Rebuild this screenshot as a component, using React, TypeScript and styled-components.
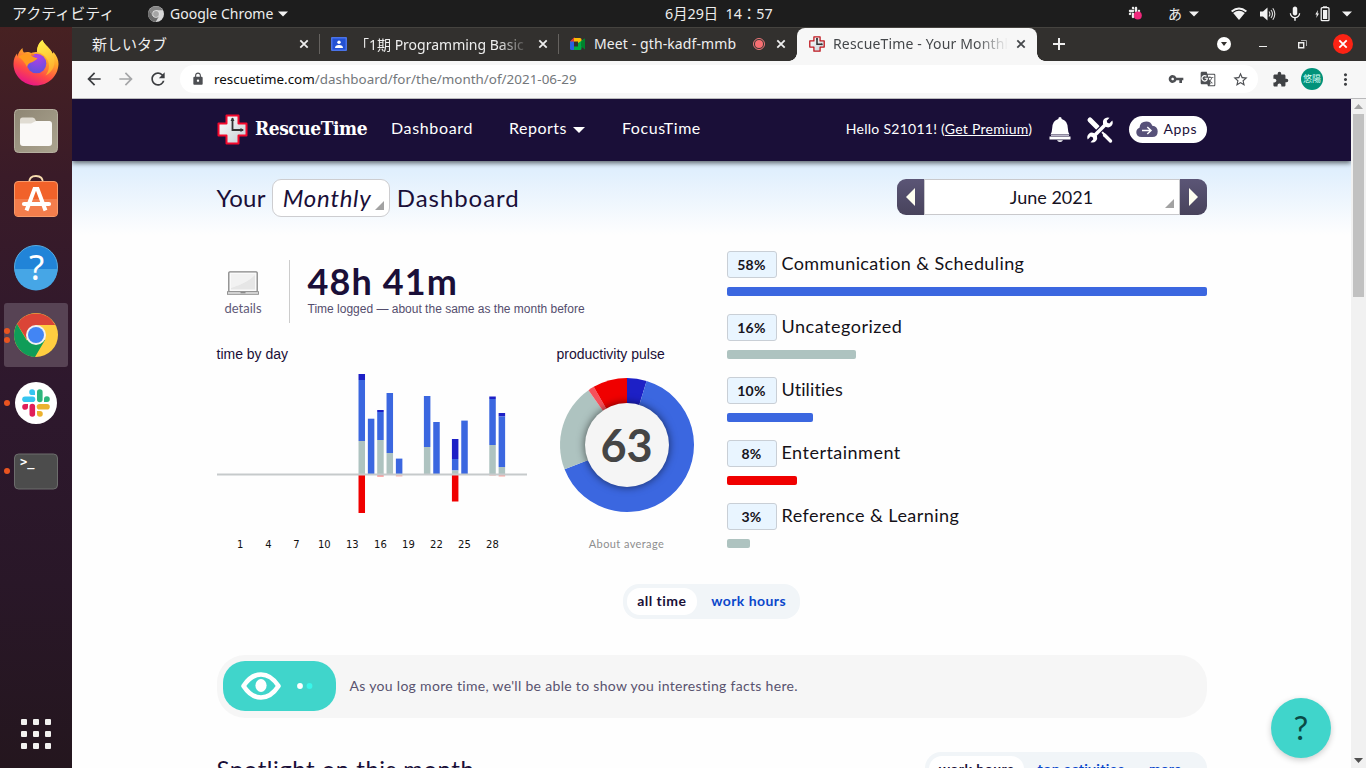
import React from 'react';
import styled, { createGlobalStyle, css } from 'styled-components';
import {
  MdArrowBack,
  MdArrowForward,
  MdRefresh,
  MdLock,
  MdVpnKey,
  MdGTranslate,
  MdStarBorder,
  MdExtension,
  MdMoreVert,
  MdMic,
} from 'react-icons/md';
import { FaSlack } from 'react-icons/fa';

const uiFont = '"Noto Sans", "Noto Sans CJK JP", sans-serif';
const pageFont = 'Lato, "Noto Sans CJK JP", sans-serif';

const colors = {
  veryProductive: '#1d20c6',
  productive: '#3b67e0',
  neutral: '#aec3c0',
  distracting: '#f5515b',
  veryDistracting: '#f00000',
};

const GlobalStyle = createGlobalStyle`
  * { box-sizing: border-box; }
  body { margin: 0; overflow: hidden; background: #fff; }
  svg { display: block; flex: none; overflow: visible; }
`;

/* ---------- desktop shell ---------- */

const Screen = styled.div`
  width: 1366px;
  height: 768px;
  overflow: hidden;
  display: flex;
  flex-direction: column;
  font-family: ${uiFont};
`;

const TopBar = styled.div`
  height: 27px;
  flex: none;
  background: #1d1d1d;
  color: #eee;
  font-size: 14px;
  line-height: 27px;
  display: grid;
  grid-template-columns: 1fr auto 1fr;
  white-space: pre;
`;

const TopLeft = styled.div`
  display: flex;
  align-items: center;
  padding-left: 12px;
`;

const Activities = styled.span`
  width: 136px;
  font-size: 15px;
`;

const AppName = styled.span`
  margin: 0 5px 0 6px;
`;

const Clock = styled.div`
  padding-left: 72px;
  width: 180px;
  font-size: 14.3px;
`;

const Tray = styled.div`
  display: flex;
  align-items: center;
  justify-content: flex-end;
  padding-right: 14px;
`;

const TrayItem = styled.span<{ $gap: number }>`
  display: flex;
  align-items: center;
  margin-left: ${(p) => p.$gap}px;
`;

const Desktop = styled.div`
  flex: 1;
  min-height: 0;
  display: flex;
`;

const Dock = styled.div`
  width: 72px;
  flex: none;
  padding-top: 2px;
  display: flex;
  flex-direction: column;
  background: linear-gradient(#472122 0%, #3a1b28 20%, #2e182d 48%, #291728 75%, #24161e 100%);
`;

const DockItem = styled.div<{ $active?: boolean }>`
  position: relative;
  height: 64px;
  margin: 2px 4px;
  border-radius: 3px;
  display: flex;
  align-items: center;
  justify-content: center;
  background: ${(p) => (p.$active ? '#574354' : 'transparent')};
`;

const RunningDots = styled.div`
  position: absolute;
  left: 0;
  top: 0;
  height: 100%;
  display: flex;
  flex-direction: column;
  justify-content: center;
  gap: 3px;
`;

const RunningDot = styled.i`
  width: 6px;
  height: 6px;
  border-radius: 50%;
  background: #e95420;
`;

const AppGrid = styled.div`
  margin: auto auto 19px;
  display: grid;
  grid-template-columns: repeat(3, 6px);
  gap: 6px;
`;

const GridDot = styled.i`
  width: 6px;
  height: 6px;
  border-radius: 1px;
  background: #f2f1ef;
`;

/* ---------- browser window ---------- */

const Browser = styled.div`
  flex: 1;
  min-width: 0;
  display: flex;
  flex-direction: column;
`;

const TabStrip = styled.div`
  height: 34px;
  flex: none;
  display: flex;
  background: #32302e;
  border-top: 1px solid #45433f;
  color: #eee;
`;

const Tab = styled.div<{ $width: number; $pad: number; $active?: boolean; $divider?: boolean }>`
  position: relative;
  width: ${(p) => p.$width}px;
  flex: none;
  display: flex;
  align-items: center;
  gap: 8px;
  padding: 0 8px 1px ${(p) => p.$pad}px;
  font-size: 14px;
  ${(p) =>
    p.$active &&
    css`
      background: #f7f7f7;
      color: #45484b;
      border-radius: 8px 8px 0 0;
      &::before,
      &::after {
        content: '';
        position: absolute;
        bottom: 0;
        width: 8px;
        height: 8px;
      }
      &::before {
        left: -8px;
        background: radial-gradient(circle at 0 0, transparent 7.5px, #f7f7f7 8px);
      }
      &::after {
        right: -8px;
        background: radial-gradient(circle at 100% 0, transparent 7.5px, #f7f7f7 8px);
      }
    `}
  ${(p) =>
    p.$divider &&
    css`
      &::after {
        content: '';
        position: absolute;
        right: 0;
        top: 6px;
        width: 1px;
        height: 20px;
        background: #65625f;
      }
    `}
`;

const TabTitle = styled.span<{ $fade?: boolean; $spacing?: number; $size?: number }>`
  flex: 1;
  overflow: hidden;
  white-space: nowrap;
  padding-bottom: 1px;
  letter-spacing: ${(p) => p.$spacing ?? 0}px;
  font-size: ${(p) => p.$size ?? 14}px;
  margin-right: ${(p) => (p.$fade ? -3 : 0)}px;
  ${(p) => p.$fade && css`mask-image: linear-gradient(90deg, #000 calc(100% - 32px), transparent);`}
`;

const Recording = styled.i`
  width: 12px;
  height: 12px;
  border-radius: 50%;
  border: 1px solid #f0787a;
  padding: 1px;
  background: #f86f72 content-box;
`;

const WindowControls = styled.div`
  flex: 1;
  display: flex;
  align-items: center;
  padding: 0 13px 1px 14px;
`;

const TabSearch = styled.i`
  width: 14px;
  height: 14px;
  border-radius: 50%;
  background: #fff;
  margin-left: auto;
  display: flex;
  align-items: center;
  justify-content: center;
`;

const Minimize = styled.i`
  width: 8px;
  height: 1px;
  margin: 5px 31px 0 28px;
  background: #eee;
`;

const CloseWindow = styled.i`
  width: 20px;
  height: 20px;
  margin-left: 26px;
  border-radius: 50%;
  background: #fb2314;
  color: #fff;
  display: flex;
  align-items: center;
  justify-content: center;
`;

const Toolbar = styled.div`
  height: 38px;
  flex: none;
  display: flex;
  align-items: center;
  padding: 0 11px 1px 12px;
  background: #f7f7f7;
  border-bottom: 1px solid #b9b9bb;
  color: #3f4144;
`;

const NavButton = styled.span<{ $muted?: boolean }>`
  width: 20px;
  margin-right: 12px;
  color: ${(p) => (p.$muted ? '#a5a6a8' : '#3b3d40')};
`;

const Omnibox = styled.div`
  flex: 1;
  height: 28px;
  border-radius: 14px;
  background: #fff;
  display: flex;
  align-items: center;
  padding: 0 9px 0 11px;
  color: #4d4f53;
`;

const Url = styled.span`
  flex: 1;
  margin-left: 9px;
  font-size: 13.4px;
  letter-spacing: 0.02px;
  color: #73777b;
  white-space: nowrap;
`;

const Domain = styled.span`
  color: #0c0c0c;
`;

const OmniboxActions = styled.span`
  display: flex;
  gap: 16px;
`;

const Avatar = styled.i`
  width: 22px;
  height: 22px;
  margin: 0 13px 0 12px;
  border-radius: 50%;
  background: #01927a;
  color: #d9fff6;
  font: 9px/22px ${uiFont};
  text-align: center;
  white-space: nowrap;
`;

const ExtensionSlot = styled.span`
  margin-left: 14px;
`;

const Viewport = styled.div`
  flex: 1;
  min-height: 0;
  display: flex;
`;

const ScrollTrack = styled.div`
  width: 15px;
  flex: none;
  padding: 5px 0;
  background: #f1f1f1;
  display: flex;
  flex-direction: column;
  align-items: center;
`;

const ScrollThumb = styled.i`
  width: 11px;
  height: 183px;
  margin: 5px 0 auto;
  background: #c1c1c1;
`;

/* ---------- page ---------- */

const Page = styled.div`
  position: relative;
  flex: 1;
  min-width: 0;
  overflow: hidden;
  font-family: ${pageFont};
  color: #1a0f38;
  background: #fefefe;
`;

const SiteHeader = styled.header`
  position: relative;
  height: 62px;
  padding: 0 144.5px 2px;
  display: flex;
  align-items: center;
  background: #1a0f38;
  color: #fff;
  box-shadow: 0 2px 5px rgba(0, 0, 0, 0.6);
  white-space: nowrap;
`;

const Brand = styled.span`
  width: 113px;
  margin: -2px 23px 0 7.5px;
  font: bold 19px 'DejaVu Serif Condensed', 'DejaVu Serif', serif;
  letter-spacing: -0.45px;
`;

const NavLink = styled.a<{ $gap: number; $spacing: number }>`
  display: flex;
  align-items: center;
  margin-right: ${(p) => p.$gap}px;
  padding-bottom: 3px;
  font-size: 16px;
  letter-spacing: ${(p) => p.$spacing}px;
`;

const Caret = styled.i`
  margin: 5px 0 0 6px;
  border: 6px solid transparent;
  border-top-color: #fff;
  border-bottom: 0;
`;

const Greeting = styled.span`
  margin: -1px 17px 0 auto;
  font-size: 14px;
  letter-spacing: 0.27px;
`;

const Underlined = styled.a`
  text-decoration: underline;
`;

const HeaderIcon = styled.span`
  margin: 1px 15.6px 0 0;
`;

const AppsButton = styled.span`
  width: 78px;
  height: 27px;
  margin-top: 1px;
  padding: 0 7px;
  border-radius: 14px;
  background: #fff;
  color: #1a0f38;
  font-size: 14px;
  line-height: 25px;
  letter-spacing: 0.6px;
  display: flex;
  gap: 6px;
`;

const AppsCloud = styled.span`
  padding-top: 5px;
`;

const Main = styled.main`
  padding: 18px 144.5px 0;
  background: linear-gradient(#dcedfd 0, #e2f0fd 14px, #fefefe 74px);
`;

const TitleRow = styled.div`
  height: 38px;
  display: flex;
  align-items: center;
  justify-content: space-between;
`;

const Title = styled.h1`
  margin: 0;
  font-size: 24px;
  font-weight: 400;
  display: flex;
  align-items: center;
`;

const TitleWord = styled.span<{ $spacing: number }>`
  letter-spacing: ${(p) => p.$spacing}px;
  padding-bottom: 2px;
`;

const Corner = styled.i<{ $right: number; $bottom: number }>`
  position: absolute;
  right: ${(p) => p.$right}px;
  bottom: ${(p) => p.$bottom}px;
  border-left: 9px solid transparent;
  border-bottom: 9px solid #a2a2a2;
`;

const PeriodSelect = styled.span`
  position: relative;
  width: 118px;
  height: 38px;
  margin: 0 7px 0 6px;
  padding: 0 0 0 10px;
  border: 1px solid #cdcdd0;
  border-radius: 9px;
  background: #fff;
  font-style: italic;
  line-height: 35px;
  letter-spacing: 0.75px;
`;

const DatePicker = styled.div`
  display: flex;
  width: 310px;
  height: 36px;
  margin-bottom: 2px;
`;

const DateStep = styled.span<{ $side: 'left' | 'right' }>`
  width: 27px;
  display: flex;
  align-items: center;
  justify-content: center;
  background: linear-gradient(#5b5576, #48435c);
  border-radius: ${(p) => (p.$side === 'left' ? '9px 0 0 9px' : '0 9px 9px 0')};
`;

const DateStepArrow = styled.i<{ $side: 'left' | 'right' }>`
  border: 9px solid transparent;
  ${(p) =>
    p.$side === 'left'
      ? css`
          border-left: 0;
          border-right-color: #fffff0;
        `
      : css`
          border-right: 0;
          border-left-color: #fffff0;
        `}
`;

const DateValue = styled.span`
  position: relative;
  flex: 1;
  border: 1px solid #c9c9cc;
  background: #fff;
  color: #16121f;
  font-size: 18px;
  line-height: 34px;
  text-align: center;
`;

const Columns = styled.div`
  display: grid;
  grid-template-columns: 480px 480px;
  column-gap: 30px;
  padding-top: 34px;
`;

const Summary = styled.div`
  display: flex;
  height: 72px;
  padding-top: 9px;
`;

const Details = styled.div`
  width: 73px;
  padding: 11px 19px 0 0;
  border-right: 1px solid #ccc;
  display: flex;
  flex-direction: column;
  align-items: center;
  gap: 5px;
  color: #615a78;
  font-size: 13px;
  line-height: 16px;
`;

const Logged = styled.div`
  padding-left: 18px;
`;

const LoggedTotal = styled.div`
  font-size: 36px;
  line-height: 42px;
  font-weight: 700;
  letter-spacing: 1.1px;
  height: 42px;
`;

const LoggedNote = styled.div`
  font: 12px/14px 'Liberation Sans', sans-serif;
  color: #544d6d;
  white-space: nowrap;
`;

const Charts = styled.div`
  display: grid;
  grid-template-columns: 310px 140px;
  column-gap: 30px;
  padding-top: 23px;
`;

const ChartTitle = styled.div`
  font: 14px/16px 'Liberation Sans', sans-serif;
`;

const DayChart = styled.div`
  margin-top: 4px;
`;

const PulseRing = styled.div`
  position: relative;
  width: 140px;
  height: 134px;
  margin-top: 16px;
  display: flex;
  justify-content: center;
`;

const PulseScore = styled.div`
  position: absolute;
  left: 28px;
  top: 25px;
  width: 84px;
  height: 84px;
  border-radius: 50%;
  background: #f5f5f5;
  box-shadow: 0 0 8px rgba(0, 0, 0, 0.6);
  color: #454545;
  font-size: 45px;
  font-weight: 700;
  line-height: 84px;
  text-align: center;
`;

const PulseNote = styled.div`
  margin-top: 25px;
  text-align: center;
  font-size: 11px;
  line-height: 14px;
  letter-spacing: 0.4px;
  color: #8e8e8e;
`;

const Category = styled.div`
  height: 63px;
`;

const CategoryHead = styled.div`
  height: 27px;
  display: flex;
  gap: 5px;
`;

const Percent = styled.span`
  width: 50px;
  height: 27px;
  border: 1px solid #c9cfd6;
  border-radius: 3px;
  background: #e9f5ff;
  font-size: 14px;
  font-weight: 700;
  line-height: 26px;
  letter-spacing: 0.3px;
  text-align: center;
  color: #161320;
`;

const CategoryName = styled.span<{ $spacing: number }>`
  font-size: 18px;
  line-height: 25px;
  letter-spacing: ${(p) => p.$spacing}px;
  color: #141118;
`;

const CategoryBar = styled.div<{ $width: number; $color: string }>`
  width: ${(p) => p.$width}px;
  height: 9px;
  margin-top: 9px;
  border-radius: 2px;
  background: ${(p) => p.$color};
`;

const Toggle = styled.div<{ $width: number }>`
  width: ${(p) => p.$width}px;
  height: 35px;
  padding: 4px;
  border-radius: 16px;
  background: #f1f5f8;
  display: flex;
  white-space: nowrap;
`;

const PeriodToggle = styled(Toggle)`
  margin: 18px auto 0 406.5px;
`;

const ToggleOption = styled.span<{ $selected?: boolean; $pad: number; $spacing?: number }>`
  height: 27px;
  padding: 0 ${(p) => p.$pad}px;
  border-radius: 13px;
  font-size: 14px;
  font-weight: 700;
  line-height: 25px;
  letter-spacing: ${(p) => p.$spacing ?? 0.45}px;
  color: ${(p) => (p.$selected ? '#1a0f38' : '#0b47cb')};
  background: ${(p) => (p.$selected ? '#fff' : 'transparent')};
`;

const Facts = styled.div`
  height: 63px;
  margin-top: 36px;
  padding: 0 0 2px 6px;
  border-radius: 28px;
  background: #f6f6f6;
  display: flex;
  align-items: center;
  gap: 14px;
  font-size: 14px;
  letter-spacing: 0.31px;
  color: #59536f;
`;

const FactsBadge = styled.span`
  width: 113px;
  height: 50px;
  border-radius: 22px;
  background: #40d5cb;
  display: flex;
  align-items: center;
  padding-left: 18px;
`;

const Spotlight = styled.div`
  display: flex;
  justify-content: space-between;
  margin-top: 34px;
`;

const SpotlightTitle = styled.h2`
  margin: 0;
  font-size: 24px;
  font-weight: 400;
  line-height: 34px;
  letter-spacing: 0.51px;
`;

const HelpButton = styled.button`
  position: absolute;
  right: 20px;
  bottom: 10px;
  width: 60px;
  height: 60px;
  padding: 0 0 2px;
  border: 0;
  border-radius: 50%;
  background: #40d5cb;
  box-shadow: 0 2px 6px rgba(0, 0, 0, 0.2);
  color: #0a4a45;
  font: 33px/58px ${pageFont};
  text-align: center;
`;

/* ---------- drawings ---------- */

const CloseIcon = () => (
  <svg width="16" height="16" viewBox="0 0 16 16">
    <path d="M4.300 4.300l7.400 7.400M11.700 4.300l-7.400 7.400" stroke="currentColor" strokeWidth="1.800" />
  </svg>
);

const PlusIcon = () => (
  <svg width="16" height="16" viewBox="0 0 16 16">
    <path d="M8 2v12M2 8h12" stroke="currentColor" strokeWidth="2" />
  </svg>
);

const DownCaret = () => (
  <svg width="10" height="6" viewBox="0 0 10 6">
    <path d="M0 .5h10L5 5.500z" fill="#f2f2f2" />
  </svg>
);

const ChromeLogo = ({ size, gray }: { size: number; gray?: boolean }) => {
  const [r, y, g, b] = gray ? ['#858585', '#d8d8d8', '#6b6b6b', '#a5a5a5'] : ['#db4437', '#ffcd40', '#0f9d58', '#4285f4'];
  return (
    <svg width={size} height={size} viewBox="0 0 44 44">
      <circle cx="22" cy="22" r="22" fill={y} />
      <path d="M3 11A22 22 0 0 1 41.2 12H22L12.5 26z" fill={r} />
      <path d="M3 11A22 22 0 0 0 21 44L31 27 22 22 12.9 27.5z" fill={g} />
      <circle cx="22" cy="22" r="10" fill={gray ? '#e5e5e5' : '#f1f1f1'} />
      <circle cx="22" cy="22" r="8" fill={b} />
    </svg>
  );
};

const FirefoxLogo = () => (
  <svg width="46" height="47" viewBox="0 1 46 47">
    <defs>
      <linearGradient id="ffBody" x1="0.75" y1="0" x2="0.3" y2="1">
        <stop offset="0" stopColor="#fff04a" />
        <stop offset="0.38" stopColor="#ffa32a" />
        <stop offset="0.7" stopColor="#ff4a45" />
        <stop offset="1" stopColor="#e5118e" />
      </linearGradient>
      <linearGradient id="ffFlame" x1="0.4" y1="0" x2="0.6" y2="1">
        <stop offset="0" stopColor="#fff04a" />
        <stop offset="1" stopColor="#ffa62b" />
      </linearGradient>
      <radialGradient id="ffGlobe" cx="0.55" cy="0.15" r="0.85">
        <stop offset="0" stopColor="#b23fe6" />
        <stop offset="1" stopColor="#5f52dc" />
      </radialGradient>
    </defs>
    <path
      d="M29.500 1c1 3.500 5 6 7.500 9.500 1.500 1.500 2 3 2.500 4.500l1-2C44 17 45.500 21 45.500 25 45 37.500 35 46.500 23 46.500S.5 37 .5 25C.5 20 2 17 4 14.500l.5 3C5.500 13 7.500 11 9.500 9c0 2 .5 3.500 1.500 4.500 3-1 5.500-.5 7 .5 2.500-1 4.500-1 6-1 0-5 2-9.500 5.500-12z"
      fill="url(#ffBody)"
    />
    <path d="M29.500 1c-4 3-5.500 7.500-5.500 12 7 1.500 12 7 12 14 0 4-1.500 7-3.500 9.500C40 33 44 25 40 15l-.5-.5C37.500 9 31 6 29.500 1z" fill="url(#ffFlame)" />
    <circle cx="23.500" cy="24.500" r="9.800" fill="url(#ffGlobe)" />
    <path d="M5.500 18c4-3.500 9-3.500 12.500-2 1.500 1.800 3.500 2.800 6.500 3-1 2.500-4 3-5.500 4.200-2.500.6-4.500 2-5 4.800-2-4-5-8-8.500-10z" fill="#ff9a1f" />
    <path d="M18 14.200q2.500 0 4 2.800l-3.500-.5z" fill="#ff7a1f" />
  </svg>
);

const FilesIcon = () => (
  <svg width="44" height="44" viewBox="0 0 44 44">
    <defs>
      <linearGradient id="filesBg" x1="0" y1="0" x2="1" y2="1">
        <stop offset="0" stopColor="#8e8674" />
        <stop offset="1" stopColor="#aba48f" />
      </linearGradient>
    </defs>
    <rect x=".5" y=".5" width="43" height="43" rx="4" fill="url(#filesBg)" stroke="#b5af9f" />
    <path d="M6 11q0-2.500 2.500-2.500h10q2 0 2.500 1.500l1 2h14V20H6z" fill="#e0dcd2" />
    <path d="M6 14.500h11l5-2.500h13q3 0 3 3v19q0 3-3 3H9q-3 0-3-3z" fill="#faf9f7" />
  </svg>
);

const SoftwareIcon = () => (
  <svg width="44" height="48" viewBox="0 2 44 48">
    <path d="M15 10q0-7 7-7t7 7" fill="none" stroke="#f7dcae" strokeWidth="1.800" />
    <rect x=".5" y="8.500" width="43" height="35" rx="3.500" fill="#f1622a" stroke="#f79a6a" />
    <path d="M1 26h42v14q0 3-3 3H4q-3 0-3-3z" fill="#f37d4c" />
    <path d="M12.500 37.500 20.500 16h3l8 21.500" fill="none" stroke="#fff" strokeWidth="4" />
    <path d="M10 31h25" stroke="#fff" strokeWidth="4.200" strokeLinecap="round" />
  </svg>
);

const HelpIcon = () => (
  <svg width="44" height="44" viewBox="0 0 44 44">
    <circle cx="22" cy="22" r="21.500" fill="#2184d8" stroke="#58acdf" />
    <path d="M.5 24h43a21.500 21.500 0 0 1-43 0z" fill="#46a6e6" />
    <text x="22.500" y="35" textAnchor="middle" fontFamily="Noto Sans" fontSize="35" fill="#fff">
      ?
    </text>
  </svg>
);

const SlackIcon = () => (
  <svg width="42" height="42" viewBox="0 0 42 42">
    <circle cx="21" cy="21" r="21" fill="#fff" />
    <g strokeWidth="5.600" strokeLinecap="round" fill="none">
      <path d="M10 17.300h7.500" stroke="#36c5f0" />
      <path d="M24.800 10v7.500" stroke="#2eb67d" />
      <path d="M32 24.700h-7.500" stroke="#ecb22e" />
      <path d="M17.300 32v-7.500" stroke="#e01e5a" />
    </g>
    <path d="M20 13h-2.800a2.900 2.900 0 1 1 2.800-3z" fill="#36c5f0" />
    <path d="M29 20v-2.800a2.900 2.900 0 1 1 3 2.800z" fill="#2eb67d" />
    <path d="M22 29h2.800a2.900 2.900 0 1 1-2.800 3z" fill="#ecb22e" />
    <path d="M13 22v2.800a2.900 2.900 0 1 1-3-2.800z" fill="#e01e5a" />
  </svg>
);

const TerminalIcon = () => (
  <svg width="44" height="37" viewBox="0 0 44 37">
    <rect x=".5" y="1" width="43" height="35" rx="4" fill="#4c4c4c" stroke="#6d6d6d" />
    <text x="6" y="13" fontFamily="DejaVu Sans Mono" fontWeight="bold" fontSize="12" fill="#fff">
      &gt;_
    </text>
  </svg>
);

const RescueCross = ({ size, small }: { size: number; small?: boolean }) => (
  <svg width={size} height={size} viewBox="0 0 31 31">
    <defs>
      <linearGradient id="crossFill" x1="0" y1="0" x2="1" y2="1">
        <stop offset="0" stopColor="#fff" />
        <stop offset="1" stopColor="#c3ccd2" />
      </linearGradient>
    </defs>
    <path
      d="M9.500 1.500h12v8h8v12h-8v8h-12v-8h-8v-12h8z"
      fill="url(#crossFill)"
      stroke={small ? '#c11a22' : '#f3092d'}
      strokeWidth={small ? 2.5 : 2}
      strokeLinejoin="round"
    />
    <path d="M15.500 4v12h10.500" fill="none" stroke="#333" strokeWidth={small ? 3 : 1.8} />
    <path d="M13.500 7l2-3.500 2 3.500zM23.500 14l3.500 2-3.500 2z" fill="#333" />
  </svg>
);

const ClassroomIcon = () => (
  <svg width="16" height="14" viewBox="0 0 16 14">
    <rect width="16" height="14" rx="1" fill="#4a73e8" />
    <rect x="1.500" y="1.500" width="13" height="11" fill="#2351d3" />
    <circle cx="8" cy="5.200" r="1.700" fill="#fff" />
    <path d="M4 11q0-3 4-3t4 3z" fill="#fff" />
  </svg>
);

const MeetIcon = () => (
  <svg width="16" height="14" viewBox="0 0 16 14">
    <path d="M0 4.500 4 1v12H1.500Q0 13 0 11.500z" fill="#2962e0" />
    <path d="M0 4.500 4.500 0v4.500z" fill="#e8392e" />
    <path d="M4 1h6q1.500 0 1.500 1.500V6L8 7V4.500H4z" fill="#fbb905" />
    <path d="M4 9.500h4V6l7-4.500V12l-3.500-2.500V11.500Q11.500 13 10 13H4z" fill="#00ad45" />
    <path d="M11 4.800 15 1.500v11L11 9z" fill="#00832d" />
  </svg>
);

const WifiIcon = () => (
  <svg width="16" height="13" viewBox="0 0 16 13">
    <path d="M0 3.800Q8-3 16 3.800l-1.300 1.500Q8-.2 1.300 5.300z" fill="#f2f2f2" />
    <path d="M2.200 6.100Q8 1.600 13.800 6.100L8 13z" fill="#f2f2f2" />
  </svg>
);

const VolumeIcon = () => (
  <svg width="15" height="14" viewBox="0 0 15 14">
    <path d="M0 4.500h3L7.500.5v13L3 9.500H0z" fill="#f2f2f2" />
    <path d="M9 4.500q1.800 2.500 0 5M11 3q3 4 0 8M12.800 1.300q4 5.700 0 11.400" fill="none" stroke="#ddd" strokeWidth="1.100" />
  </svg>
);

const BatteryIcon = () => (
  <svg width="15" height="16" viewBox="0 0 15 16">
    <path d="M3 4 .3 8.500h1.500L1.300 12 4 7.500H2.500z" fill="#f2f2f2" />
    <path d="M8 .3h4v1.200H8z" fill="#f2f2f2" />
    <rect x="6.200" y="1.700" width="7.800" height="13" rx="1" fill="none" stroke="#f2f2f2" strokeWidth="1.300" />
    <path d="M8 4h4.200v9H8z" fill="#f2f2f2" />
  </svg>
);

const RestoreIcon = () => (
  <svg width="9" height="9" viewBox="0 0 9 9" fill="none" stroke="#eee">
    <path d="M3 .5h5.500V6" stroke="#aaa" />
    <path d="M.7 2.700h5v5h-5z" strokeWidth="1.400" />
  </svg>
);

const BellIcon = () => (
  <svg width="22" height="25" viewBox="0 0 22 25">
    <path d="M11 0q1.700 0 1.700 2Q18.500 3.700 18.800 11q.2 4.500 1.700 6.500h-19Q3 15.500 3.200 11 3.500 3.700 9.300 2 9.300 0 11 0z" fill="#fff" />
    <path d="M.5 19.500h21v3H.5zM8 23.300h6Q13.300 25 11 25t-3-1.700z" fill="#fff" />
    <path d="M2 18.500h18" stroke="#bdb8cb" />
  </svg>
);

const ToolsIcon = () => (
  <svg width="26" height="26" viewBox="0 0 26 26">
    <path d="M3 3l7.500 7.500" stroke="#fff" strokeWidth="5" strokeLinecap="round" />
    <path d="M10 10l11.500 11.500" stroke="#fff" strokeWidth="1.800" />
    <path d="M17.500 18l6 6" stroke="#fff" strokeWidth="3.400" strokeLinecap="round" />
    <path d="M7.500 18.500l11-11" stroke="#1a0f38" strokeWidth="6" />
    <path d="M6.500 19.500l13-13" stroke="#fff" strokeWidth="3.600" />
    <path d="M22.500.8 19.700 3.800l.6 2 2 .6 3-2.800q1.300 3.400-1 5.500-2.200 2-5.200.9L16 6.900q-.8-3 1-5Q19.500-.4 22.500.8z" fill="#fff" />
    <path d="M3.500 25.200 6.300 22.200l-.6-2-2-.6-3 2.800Q-.6 19 1.700 16.900q2.200-2 5.200-.9L10 19.100q.8 3-1 5-2.500 2.300-5.500 1.100z" fill="#fff" />
  </svg>
);

const CloudIcon = () => (
  <svg width="22" height="17" viewBox="0 0 22 17">
    <path d="M5.500 16Q.3 16 .3 11.300q0-3.600 3.200-4.600Q4 .5 10.300.5q4.600 0 6 4.300 5.400.6 5.400 5.700 0 5.500-5.500 5.500z" fill="#575179" />
    <path d="M6 9.500h8.500M11.300 6l3.700 3.500-3.700 3.500" fill="none" stroke="#fff" strokeWidth="1.500" />
  </svg>
);

const LaptopIcon = () => (
  <svg width="32" height="24" viewBox="0 0 32 24">
    <rect x="1.800" y=".8" width="28.400" height="20" rx="1" fill="#fafafa" stroke="#858585" strokeWidth="1.300" />
    <path d="M4 3h24v1Q20 12 4 17z" fill="#f2f2f2" />
    <path d="M4 18.500V17Q20 12 28 4v14.500z" fill="#e6e6e6" />
    <rect x=".5" y="20.700" width="31" height="2.600" fill="#ddd" stroke="#8b8b8b" strokeWidth=".9" />
    <path d="M13.500 21h5v1.300h-5z" fill="#8b8b8b" />
  </svg>
);

const EyeIcon = () => (
  <svg width="76" height="28" viewBox="0 0 76 28">
    <path d="M2.500 14Q10 2.500 20 2.500T37.500 14Q30 25.500 20 25.500T2.500 14z" fill="none" stroke="#fff" strokeWidth="4.600" strokeLinejoin="round" />
    <ellipse cx="20" cy="13.500" rx="5.600" ry="6.500" fill="#fff" />
    <circle cx="59" cy="14" r="2.900" fill="#fff" />
    <circle cx="68.500" cy="14" r="2.900" fill="#38f6ea" />
  </svg>
);

const ScrollArrow = ({ down }: { down?: boolean }) => (
  <svg width="9" height="5" viewBox="0 0 9 5">
    <path d={down ? 'M0 0h9L4.500 5z' : 'M0 5h9L4.500 0z'} fill={down ? '#505050' : '#a3a3a3'} />
  </svg>
);

/* ---------- charts ---------- */

type Day = { day: number; spans: [number, number, string][]; below?: [number, string] };

const { veryProductive: vp, productive: p, neutral: n, veryDistracting: vd } = colors;

const days: Day[] = [
  { day: 14, spans: [[8, 14, vp], [14, 75, p], [75, 108, n]], below: [38, vd] },
  { day: 15, spans: [[52.7, 108, p]] },
  { day: 16, spans: [[44, 46, vp], [46, 74, p], [74, 108, n]], below: [1.7, '#f98a8a'] },
  { day: 17, spans: [[27, 87, p], [87, 108, n]] },
  { day: 18, spans: [[92.6, 108, p]], below: [1.5, '#f9b5ad'] },
  { day: 21, spans: [[30, 81, p], [81, 108, n]] },
  { day: 22, spans: [[56, 108, p]] },
  { day: 24, spans: [[73, 93, vp], [93, 104.5, p], [104.5, 108, n]], below: [26.5, vd] },
  { day: 25, spans: [[54.6, 108, p]] },
  { day: 28, spans: [[30.5, 33, vp], [33, 79, p], [79, 108, n]], below: [1, '#f9d0cc'] },
  { day: 29, spans: [[47, 50.5, vp], [50.5, 101, p], [101, 108, n]], below: [1.5, '#f9a5a0'] },
];

const dayCenter = (day: number) => 23.3 + (day - 1) * 9.34;

const TimeByDay = () => (
  <svg width="310" height="190" viewBox="0 0 310 190">
    {days.map(({ day, spans, below }) => (
      <g key={day}>
        {spans.map(([top, bottom, fill]) => (
          <rect key={top} x={dayCenter(day) - 3.2} y={top} width="6.5" height={bottom - top} fill={fill} />
        ))}
        {below && <rect x={dayCenter(day) - 3.2} y="109" width="6.5" height={below[0]} fill={below[1]} />}
      </g>
    ))}
    <path d="M0 108.500h310" stroke="#c6cacb" strokeWidth="2" />
    {[1, 4, 7, 10, 13, 16, 19, 22, 25, 28].map((day) => (
      <text key={day} x={dayCenter(day)} y="182" textAnchor="middle" fontFamily="DejaVu Sans" fontSize="10" fill="#111">
        {day}
      </text>
    ))}
  </svg>
);

const slices: [number, number, string][] = [
  [0, 17, vp],
  [17, 248.7, p],
  [248.7, 324.9, n],
  [324.9, 330.2, colors.distracting],
  [330.2, 360, vd],
];

const onRing = (deg: number) => {
  const a = (deg * Math.PI) / 180;
  return `${67 + 67 * Math.sin(a)} ${67 - 67 * Math.cos(a)}`;
};

const Ring = () => (
  <svg width="134" height="134" viewBox="0 0 134 134">
    {slices.map(([from, to, fill]) => (
      <path key={from} d={`M67 67L${onRing(from)}A67 67 0 ${to - from > 180 ? 1 : 0} 1 ${onRing(to)}z`} fill={fill} />
    ))}
  </svg>
);

const categories = [
  { percent: 58, name: 'Communication & Scheduling', width: 480, color: p, spacing: 0.4 },
  { percent: 16, name: 'Uncategorized', width: 129, color: n, spacing: 0.52 },
  { percent: 10, name: 'Utilities', width: 86, color: p, spacing: 0.1 },
  { percent: 8, name: 'Entertainment', width: 70, color: vd, spacing: 0.48 },
  { percent: 3, name: 'Reference & Learning', width: 23, color: n, spacing: 0.46 },
];

/* ---------- app ---------- */

export default function App() {
  return (
    <Screen>
      <GlobalStyle />
      <TopBar>
        <TopLeft>
          <Activities>アクティビティ</Activities>
          <ChromeLogo size={16} gray />
          <AppName>Google Chrome</AppName>
          <DownCaret />
        </TopLeft>
        <Clock>6月29日  14：57</Clock>
        <Tray>
          <TrayItem $gap={0}>
            <svg width="15" height="15" viewBox="0 0 15 15">
              <FaSlack size={13} color="#eee" />
              <circle cx="9.800" cy="9.500" r="4" fill="#f0287c" />
            </svg>
          </TrayItem>
          <TrayItem $gap={25}>あ</TrayItem>
          <TrayItem $gap={7}><DownCaret /></TrayItem>
          <TrayItem $gap={32}><WifiIcon /></TrayItem>
          <TrayItem $gap={13}><VolumeIcon /></TrayItem>
          <TrayItem $gap={11}><MdMic size={18} color="#f2f2f2" /></TrayItem>
          <TrayItem $gap={11}><BatteryIcon /></TrayItem>
          <TrayItem $gap={12}><DownCaret /></TrayItem>
        </Tray>
      </TopBar>

      <Desktop>
        <Dock>
          <DockItem><FirefoxLogo /></DockItem>
          <DockItem><FilesIcon /></DockItem>
          <DockItem><SoftwareIcon /></DockItem>
          <DockItem><HelpIcon /></DockItem>
          <DockItem $active>
            <RunningDots><RunningDot /><RunningDot /></RunningDots>
            <ChromeLogo size={44} />
          </DockItem>
          <DockItem>
            <RunningDots><RunningDot /></RunningDots>
            <SlackIcon />
          </DockItem>
          <DockItem>
            <RunningDots><RunningDot /></RunningDots>
            <TerminalIcon />
          </DockItem>
          <AppGrid>
            {Array.from({ length: 9 }, (_, i) => <GridDot key={i} />)}
          </AppGrid>
        </Dock>

        <Browser>
          <TabStrip>
            <Tab $width={248} $pad={20} $divider>
              <TabTitle $size={15}>新しいタブ</TabTitle>
              <CloseIcon />
            </Tab>
            <Tab $width={239} $pad={11} $divider>
              <ClassroomIcon />
              <TabTitle $fade>「1期 Programming Basic</TabTitle>
              <CloseIcon />
            </Tab>
            <Tab $width={238} $pad={11}>
              <MeetIcon />
              <TabTitle $spacing={0.1}>Meet - gth-kadf-mmb</TabTitle>
              <Recording />
              <CloseIcon />
            </Tab>
            <Tab $width={240} $pad={12} $active>
              <RescueCross size={16} small />
              <TabTitle $fade $spacing={0.15}>RescueTime - Your Monthly</TabTitle>
              <CloseIcon />
            </Tab>
            <WindowControls>
              <PlusIcon />
              <TabSearch>
                <svg width="6" height="4" viewBox="0 0 6 4"><path d="M0 0h6L3 4z" fill="#32302e" /></svg>
              </TabSearch>
              <Minimize />
              <RestoreIcon />
              <CloseWindow><CloseIcon /></CloseWindow>
            </WindowControls>
          </TabStrip>

          <Toolbar>
            <NavButton><MdArrowBack size={20} /></NavButton>
            <NavButton $muted><MdArrowForward size={20} /></NavButton>
            <NavButton><MdRefresh size={20} /></NavButton>
            <Omnibox>
              <MdLock size={14} />
              <Url><Domain>rescuetime.com</Domain>/dashboard/for/the/month/of/2021-06-29</Url>
              <OmniboxActions>
                <MdVpnKey size={16} />
                <MdGTranslate size={16} />
                <MdStarBorder size={17} />
              </OmniboxActions>
            </Omnibox>
            <ExtensionSlot><MdExtension size={17} /></ExtensionSlot>
            <Avatar>悠陽</Avatar>
            <MdMoreVert size={19} />
          </Toolbar>

          <Viewport>
            <Page>
              <SiteHeader>
                <RescueCross size={31} />
                <Brand>RescueTime</Brand>
                <NavLink $gap={36} $spacing={0.64}>Dashboard</NavLink>
                <NavLink $gap={37} $spacing={0.5}>Reports<Caret /></NavLink>
                <NavLink $gap={0} $spacing={0.55}>FocusTime</NavLink>
                <Greeting>Hello S21011! (<Underlined>Get Premium</Underlined>)</Greeting>
                <HeaderIcon><BellIcon /></HeaderIcon>
                <HeaderIcon><ToolsIcon /></HeaderIcon>
                <AppsButton><AppsCloud><CloudIcon /></AppsCloud>Apps</AppsButton>
              </SiteHeader>

              <Main>
                <TitleRow>
                  <Title>
                    <TitleWord $spacing={0.3}>Your</TitleWord>
                    <PeriodSelect>Monthly<Corner $right={5} $bottom={6} /></PeriodSelect>
                    <TitleWord $spacing={0.95}>Dashboard</TitleWord>
                  </Title>
                  <DatePicker>
                    <DateStep $side="left"><DateStepArrow $side="left" /></DateStep>
                    <DateValue>June 2021<Corner $right={5} $bottom={6} /></DateValue>
                    <DateStep $side="right"><DateStepArrow $side="right" /></DateStep>
                  </DatePicker>
                </TitleRow>

                <Columns>
                  <div>
                    <Summary>
                      <Details><LaptopIcon />details</Details>
                      <Logged>
                        <LoggedTotal>48h 41m</LoggedTotal>
                        <LoggedNote>Time logged — about the same as the month before</LoggedNote>
                      </Logged>
                    </Summary>
                    <Charts>
                      <div>
                        <ChartTitle>time by day</ChartTitle>
                        <DayChart><TimeByDay /></DayChart>
                      </div>
                      <div>
                        <ChartTitle>productivity pulse</ChartTitle>
                        <PulseRing>
                          <Ring />
                          <PulseScore>63</PulseScore>
                        </PulseRing>
                        <PulseNote>About average</PulseNote>
                      </div>
                    </Charts>
                  </div>
                  <div>
                    {categories.map((c) => (
                      <Category key={c.name}>
                        <CategoryHead>
                          <Percent>{c.percent}%</Percent>
                          <CategoryName $spacing={c.spacing}>{c.name}</CategoryName>
                        </CategoryHead>
                        <CategoryBar $width={c.width} $color={c.color} />
                      </Category>
                    ))}
                  </div>
                </Columns>

                <PeriodToggle $width={177}>
                  <ToggleOption $selected $pad={10.3}>all time</ToggleOption>
                  <ToggleOption $pad={14.5}>work hours</ToggleOption>
                </PeriodToggle>

                <Facts>
                  <FactsBadge><EyeIcon /></FactsBadge>
                  As you log more time, we'll be able to show you interesting facts here.
                </Facts>

                <Spotlight>
                  <SpotlightTitle>Spotlight on this month</SpotlightTitle>
                  <Toggle $width={282}>
                    <ToggleOption $selected $pad={10.3}>work hours</ToggleOption>
                    <ToggleOption $pad={13.5}>top activities</ToggleOption>
                    <ToggleOption $pad={11} $spacing={0.1}>more</ToggleOption>
                  </Toggle>
                </Spotlight>
              </Main>
              <HelpButton>?</HelpButton>
            </Page>
            <ScrollTrack>
              <ScrollArrow />
              <ScrollThumb />
              <ScrollArrow down />
            </ScrollTrack>
          </Viewport>
        </Browser>
      </Desktop>
    </Screen>
  );
}
